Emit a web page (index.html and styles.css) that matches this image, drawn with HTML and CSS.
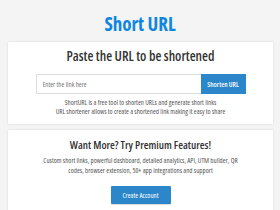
FILE: index.html
```html
<!DOCTYPE html>
<html>
<head>
<meta charset="utf-8">
<link rel="stylesheet" href="styles.css">
</head>
<body>
<h1 class="logo">Short URL</h1>
<section class="card card-main">
  <h2 class="card-title">Paste the URL to be shortened</h2>
  <form class="url-form">
    <input class="url-input" type="text" placeholder="Enter the link here">
    <button class="url-button" type="button">Shorten URL</button>
  </form>
  <p class="note">ShortURL is a free tool to shorten URLs and generate short links<br>URL shortener allows to create a shortened link making it easy to share</p>
</section>
<section class="card card-premium">
  <h2 class="premium-title">Want More? Try Premium Features!</h2>
  <p class="premium-text">Custom short links, powerful dashboard, detailed analytics, API, UTM builder, QR codes, browser extension, 50+ app integrations and support</p>
  <button class="account-button" type="button">Create Account</button>
</section>
</body>
</html>
```
FILE: styles.css
```css
html, body {
  margin: 0;
  padding: 0;
}
body {
  background: #f4f4f4;
  font-family: "Open Sans", sans-serif;
  font-stretch: condensed;
  color: #444;
  overflow: hidden;
}
.logo {
  margin: 0;
  padding-top: 4px;
  height: 38px;
  text-align: center;
  font-size: 19px;
  font-weight: 700;
  color: #0d86e0;
  line-height: 40px;
}
.card {
  background: #fff;
  margin: 0 7px 0 8px;
  box-shadow: 0 0 2px rgba(0, 0, 0, 0.12);
  text-align: center;
}
.card-main {
  padding: 6px 0 8.5px;
}
.card-title {
  margin: 0;
  font-size: 13.6px;
  line-height: 16px;
  font-weight: 600;
  color: #333;
}
.url-form {
  display: flex;
  justify-content: center;
  margin-top: 10px;
}
.url-input {
  box-sizing: border-box;
  width: 165px;
  height: 20px;
  margin: 0;
  border: 1px solid #ddd;
  border-right: none;
  padding: 0 6px;
  font-family: inherit;
  font-stretch: condensed;
  font-size: 7px;
  color: #666;
  outline: none;
}
.url-input::placeholder {
  color: #777;
}
.url-button {
  box-sizing: border-box;
  width: 45px;
  height: 20px;
  margin: 0;
  border: none;
  background: #2b87c9;
  color: #fff;
  font-family: inherit;
  font-stretch: condensed;
  font-size: 7px;
  font-weight: 600;
  padding: 0;
}
.note {
  margin: 3.5px 0 0;
  font-size: 7px;
  line-height: 9px;
  color: #555;
}
.card-premium {
  margin-top: 6px;
  padding: 8px 0 20px;
}
.premium-title {
  margin: 0;
  font-size: 11px;
  line-height: 14px;
  font-weight: 600;
  color: #333;
}
.premium-text {
  margin: 4px auto 0;
  width: 207px;
  font-size: 7px;
  line-height: 10px;
  color: #555;
}
.account-button {
  margin-top: 10px;
  width: 60px;
  height: 18px;
  border: none;
  border-radius: 1px;
  background: #2b87c9;
  color: #fff;
  font-family: inherit;
  font-stretch: condensed;
  font-size: 7px;
  padding: 0;
  box-shadow: 0 1px 1px rgba(0,0,0,0.15);
}
```
